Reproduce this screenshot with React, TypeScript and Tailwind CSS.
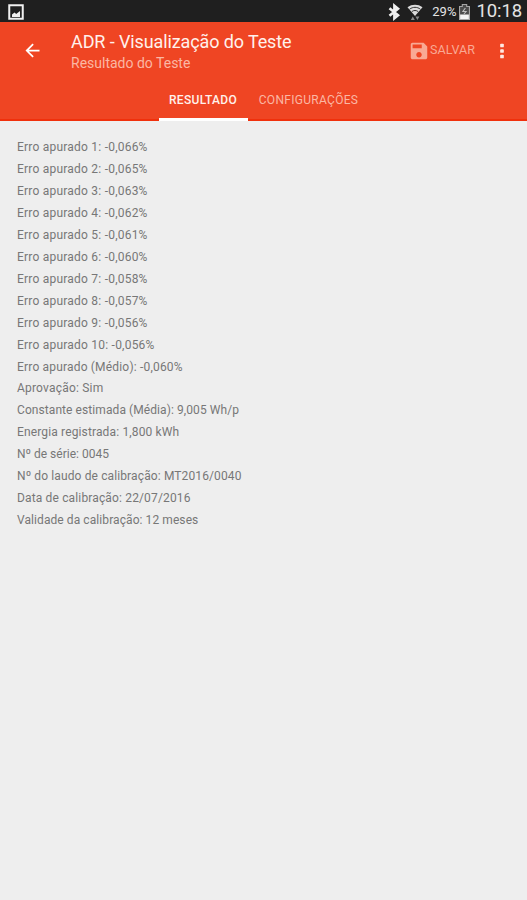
import React from 'react';

const RESULTS = [
  { label: 'Erro apurado 1', value: '-0,066%', tracking: 'tracking-[0.22px]' },
  { label: 'Erro apurado 2', value: '-0,065%', tracking: 'tracking-[0.22px]' },
  { label: 'Erro apurado 3', value: '-0,063%', tracking: 'tracking-[0.22px]' },
  { label: 'Erro apurado 4', value: '-0,062%', tracking: 'tracking-[0.22px]' },
  { label: 'Erro apurado 5', value: '-0,061%', tracking: 'tracking-[0.22px]' },
  { label: 'Erro apurado 6', value: '-0,060%', tracking: 'tracking-[0.22px]' },
  { label: 'Erro apurado 7', value: '-0,058%', tracking: 'tracking-[0.22px]' },
  { label: 'Erro apurado 8', value: '-0,057%', tracking: 'tracking-[0.22px]' },
  { label: 'Erro apurado 9', value: '-0,056%', tracking: 'tracking-[0.22px]' },
  { label: 'Erro apurado 10', value: '-0,056%', tracking: 'tracking-[0.22px]' },
  { label: 'Erro apurado (Médio)', value: '-0,060%', tracking: 'tracking-[0.18px]' },
  { label: 'Aprovação', value: 'Sim', tracking: 'tracking-[0.2px]' },
  { label: 'Constante estimada (Média)', value: '9,005 Wh/p', tracking: 'tracking-[0.08px]' },
  { label: 'Energia registrada', value: '1,800 kWh', tracking: 'tracking-[0.14px]' },
  { label: 'Nº de série', value: '0045', tracking: 'tracking-normal' },
  { label: 'Nº do laudo de calibração', value: 'MT2016/0040', tracking: 'tracking-[0.12px]' },
  { label: 'Data de calibração', value: '22/07/2016', tracking: 'tracking-[0.15px]' },
  { label: 'Validade da calibração', value: '12 meses', tracking: 'tracking-[0.08px]' },
];

function StatusBar() {
  return (
    <div className="flex h-[22px] items-center bg-[#1f1f1f] pl-2 pr-[5px] pt-px text-[#e4e4e4]">
      {/* Screenshot notification */}
      <svg className="mt-px h-4 w-4" viewBox="0 0 16 16" fill="none">
        <rect x="1.25" y="1.25" width="13.5" height="13.5" stroke="#f0f0f0" strokeWidth="2" />
        <path d="M4 13v-2.500l2.500-2 1.700 1.500L12 7v6z" fill="#f0f0f0" />
      </svg>

      {/* Bluetooth */}
      <svg className="ml-auto mr-[6px] h-[18px] w-[14px]" viewBox="0 0 14 18" fill="none" stroke="#f0f0f0" strokeWidth="2.6">
        <path d="M2.500 5.200l8.500 7-3.600 3V2.800L11 5.800l-8.500 7" />
      </svg>

      {/* Wifi with transfer arrows */}
      <svg className="mr-[9px] h-[18px] w-4" viewBox="0 0 16 18">
        <path d="M0.500 4.200C4.800 0.900 11.200 0.900 15.500 4.200L8 13z" fill="#dcdcdc" />
        <path d="M2.600 6.200c3.200-2.500 7.600-2.500 10.800 0M4.800 8.600c2-1.500 4.400-1.500 6.400 0" stroke="#1f1f1f" strokeWidth="0.9" fill="none" />
        <path d="M3.800 17l2-3.500 2 3.500zM8.400 13.500l2 3.500 2-3.500z" fill="#8a8a8a" />
      </svg>

      <span className="text-[13px] leading-none">29%</span>

      {/* Battery */}
      <svg className="ml-[3px] mr-[6px] h-4 w-[11px]" viewBox="0 0 10 16" preserveAspectRatio="none">
        <path d="M3 0.500h4v2h2.500v13h-9v-13H3z" fill="#4b4b4b" stroke="#a5a5a5" />
        <path d="M1 10.500h8V15H1z" fill="#f4f4f4" />
        <path d="M5.800 4L3.500 7.500h3L4.500 10" stroke="#bdbdbd" fill="none" />
      </svg>

      <span className="text-[18.500px] leading-none tracking-[-0.1px]">10:18</span>
    </div>
  );
}

function Toolbar() {
  return (
    <div className="flex h-[57px] items-center pl-[22px] pr-[14px]">
      <svg className="h-[21px] w-[21px] shrink-0" viewBox="0 0 24 24" fill="#fff">
        <path d="M20 11H7.830l5.590-5.590L12 4l-8 8 8 8 1.410-1.410L7.830 13H20v-2z" />
      </svg>

      <div className="ml-7 whitespace-nowrap pt-[3px]">
        <h1 className="text-[18px] leading-[22px] tracking-[-0.11px] text-[#fff1ec]">ADR - Visualização do Teste</h1>
        <p className="text-[14px] leading-[21px] text-[#fbb7a4]">Resultado do Teste</p>
      </div>

      <button className="ml-auto flex items-center text-[#f9a994]">
        <svg className="h-[22px] w-[22px]" viewBox="0 0 24 24" fill="currentColor">
          <path d="M17 3H5c-1.110 0-2 .9-2 2v14c0 1.100.89 2 2 2h14c1.100 0 2-.9 2-2V7l-4-4zm-5 16c-1.660 0-3-1.340-3-3s1.340-3 3-3 3 1.340 3 3-1.340 3-3 3zm3-10H5V5h10v4z" />
        </svg>
        <span className="text-[12.500px] leading-none tracking-[0.05px]">SALVAR</span>
      </button>

      <svg className="ml-[16px] h-[22px] w-[22px]" viewBox="0 0 24 24" fill="#ffe9e2">
        <rect x="10" y="4" width="4" height="4" rx="1" />
        <rect x="10" y="10" width="4" height="4" rx="1" />
        <rect x="10" y="16" width="4" height="4" rx="1" />
      </svg>
    </div>
  );
}

function Tabs() {
  return (
    <div className="flex h-[42px] justify-center border-b-2 border-[#f0300c] pl-px text-[12px] leading-none tracking-[0.3px]">
      <div className="-mb-0.5 flex h-[42px] w-[89px] items-center justify-center border-b-[3px] border-white pt-[3px] font-medium text-[#fff1ec]">
        RESULTADO
      </div>
      <div className="flex w-[122px] items-center justify-center pt-0.5 text-[#fbb7a4]">CONFIGURAÇÕES</div>
    </div>
  );
}

export default function App() {
  return (
    <div className="min-h-screen w-full bg-[#eeeeee] font-['Roboto',sans-serif]">
      <StatusBar />
      <header className="bg-[#ef4523]">
        <Toolbar />
        <Tabs />
      </header>
      <main className="px-[17px] pt-4">
        {RESULTS.map((item) => (
          <p key={item.label} className={`text-[12px] leading-[21.950px] text-[#777777] ${item.tracking}`}>
            {item.label}: {item.value}
          </p>
        ))}
      </main>
    </div>
  );
}
